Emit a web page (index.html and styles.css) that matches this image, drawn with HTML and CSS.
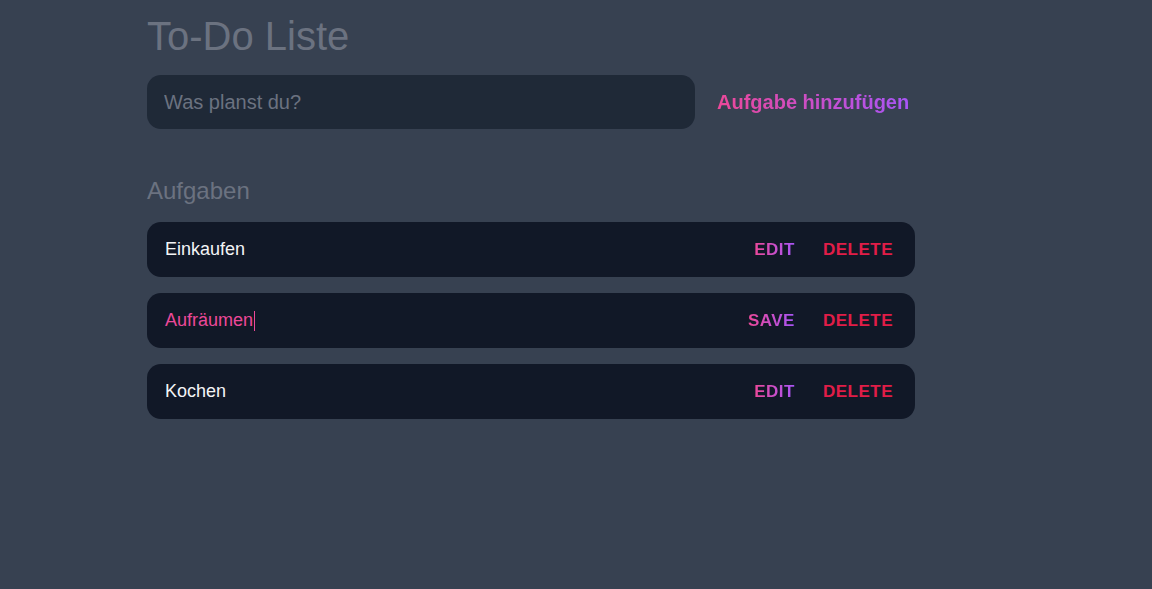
FILE: index.html
```html
<!DOCTYPE html>
<html lang="de">
<head>
<meta charset="utf-8">
<title>To-Do Liste</title>
<link rel="stylesheet" href="styles.css">
</head>
<body>
<main class="container">
  <h1 class="title">To-Do Liste</h1>
  <form class="add-form">
    <input class="add-input" type="text" placeholder="Was planst du?">
    <button class="add-btn" type="button"><span class="grad">Aufgabe hinzufügen</span></button>
  </form>
  <h2 class="subtitle">Aufgaben</h2>
  <ul class="tasks">
    <li class="task">
      <span class="task-text">Einkaufen</span>
      <div class="actions">
        <button class="act edit"><span class="grad">Edit</span></button>
        <button class="act delete">Delete</button>
      </div>
    </li>
    <li class="task">
      <span class="task-text editing">Aufräumen<span class="caret"></span></span>
      <div class="actions">
        <button class="act edit"><span class="grad">Save</span></button>
        <button class="act delete">Delete</button>
      </div>
    </li>
    <li class="task">
      <span class="task-text">Kochen</span>
      <div class="actions">
        <button class="act edit"><span class="grad">Edit</span></button>
        <button class="act delete">Delete</button>
      </div>
    </li>
  </ul>
</main>
</body>
</html>
```
FILE: styles.css
```css
* { box-sizing: border-box; }
html, body {
  margin: 0;
  padding: 0;
  background: #374151;
  font-family: "Liberation Sans", Arial, sans-serif;
  height: 100%;
}
.container {
  width: 768px;
  margin-left: 147px;
  padding-top: 12px;
}
.title {
  margin: 0;
  font-size: 40px;
  font-weight: 400;
  color: #6b7280;
  line-height: 48px;
}
.add-form {
  display: flex;
  align-items: center;
  margin-top: 15px;
}
.add-input {
  width: 548px;
  height: 54px;
  border: none;
  outline: none;
  border-radius: 14px;
  background: #1f2937;
  padding: 0 17px;
  font-family: inherit;
  font-size: 20px;
  color: #e5e7eb;
}
.add-input::placeholder { color: #6b7280; }
.add-btn {
  margin-left: 22px;
  background: none;
  border: none;
  padding: 0;
  font-family: inherit;
  font-size: 20px;
  font-weight: 700;
  cursor: pointer;
}
.grad {
  background: linear-gradient(90deg, #ec4899, #a855f7);
  -webkit-background-clip: text;
  background-clip: text;
  color: transparent;
}
.subtitle {
  margin: 47px 0 0;
  font-size: 24px;
  font-weight: 400;
  color: #6b7280;
  line-height: 30px;
}
.tasks {
  list-style: none;
  margin: 16px 0 0;
  padding: 0;
  display: flex;
  flex-direction: column;
  gap: 16px;
}
.task {
  height: 55px;
  background: #111827;
  border-radius: 14px;
  display: flex;
  align-items: center;
  justify-content: space-between;
  padding: 0 22px 0 18px;
}
.task-text {
  font-size: 18px;
  color: #f3f4f6;
  display: flex;
  align-items: center;
}
.task-text.editing { color: #ec4899; }
.caret {
  display: inline-block;
  width: 1px;
  height: 20px;
  background: #ec4899;
  margin-left: 1px;
}
.actions {
  display: flex;
  align-items: center;
  gap: 28px;
}
.act {
  background: none;
  border: none;
  padding: 0;
  font-family: inherit;
  font-size: 17px;
  font-weight: 700;
  text-transform: uppercase;
  letter-spacing: 0.5px;
  cursor: pointer;
}
.delete { color: #e11d48; }
```
